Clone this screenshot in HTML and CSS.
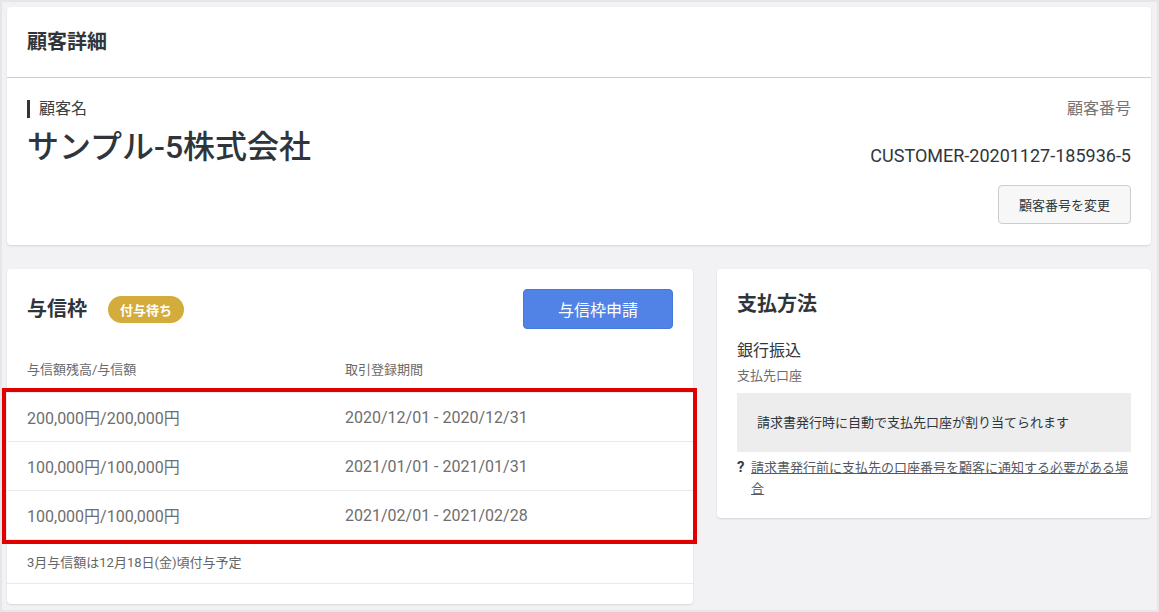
FILE: index.html
```html
<!DOCTYPE html>
<html lang="ja">
<head>
<meta charset="utf-8">
<title>顧客詳細</title>
<link rel="stylesheet" href="styles.css">
</head>
<body>
<div class="frame">
  <section class="card customer">
    <header class="card-header">
      <h1 class="card-title">顧客詳細</h1>
    </header>
    <div class="customer-body">
      <div class="customer-name-block">
        <div class="field-label">顧客名</div>
        <div class="customer-name">サンプル-5株式会社</div>
      </div>
      <div class="customer-number-block">
        <div class="number-label">顧客番号</div>
        <div class="number-value">CUSTOMER-20201127-185936-5</div>
        <button class="btn btn-default" type="button">顧客番号を変更</button>
      </div>
    </div>
  </section>

  <div class="columns">
    <section class="card credit">
      <div class="credit-head">
        <div class="credit-title-wrap">
          <h2 class="card-title">与信枠</h2>
          <span class="badge">付与待ち</span>
        </div>
        <button class="btn btn-primary" type="button">与信枠申請</button>
      </div>
      <div class="credit-table">
        <div class="row row-head">
          <div class="cell">与信額残高/与信額</div>
          <div class="cell">取引登録期間</div>
        </div>
        <div class="rows">
          <div class="row row-data">
            <div class="cell">200,000円/200,000円</div>
            <div class="cell">2020/12/01 - 2020/12/31</div>
          </div>
          <div class="row row-data">
            <div class="cell">100,000円/100,000円</div>
            <div class="cell">2021/01/01 - 2021/01/31</div>
          </div>
          <div class="row row-data">
            <div class="cell">100,000円/100,000円</div>
            <div class="cell">2021/02/01 - 2021/02/28</div>
          </div>
          <div class="highlight"></div>
        </div>
        <div class="row row-note">
          <div class="cell">3月与信額は12月18日(金)頃付与予定</div>
        </div>
      </div>
    </section>

    <section class="card payment">
      <h2 class="card-title">支払方法</h2>
      <div class="pay-method">銀行振込</div>
      <div class="pay-sub">支払先口座</div>
      <div class="pay-box">請求書発行時に自動で支払先口座が割り当てられます</div>
      <div class="help">
        <span class="help-mark">?</span>
        <a class="help-link" href="#">請求書発行前に支払先の口座番号を顧客に通知する必要がある場合</a>
      </div>
    </section>
  </div>
</div>
</body>
</html>
```

FILE: styles.css
```css
* { box-sizing: border-box; }

html, body {
  margin: 0;
  padding: 0;
}

body {
  font-family: Roboto, "Noto Sans CJK JP", sans-serif;
  color: #30363b;
  background: #f2f2f4;
}

.frame {
  width: 1159px;
  height: 612px;
  border: 2px solid #e6e6e8;
  background: #f2f2f4;
  padding: 5px 6px 5px 5px;
  overflow: hidden;
}

.card {
  background: #fff;
  border-radius: 4px;
  box-shadow: 0 1px 2px rgba(0, 0, 0, 0.12);
}

.card-title {
  margin: 0;
  font-size: 20px;
  font-weight: 700;
  line-height: 30px;
  color: #2f353a;
}

/* customer card */
.card-header {
  height: 71px;
  padding: 0 20px;
  display: flex;
  align-items: center;
  border-bottom: 1px solid #cfcfd1;
}

.customer-body {
  display: flex;
  justify-content: space-between;
  padding: 20px 20px 21px;
}

.field-label {
  display: flex;
  align-items: center;
  font-size: 16px;
  line-height: 22px;
  color: #3a3f44;
}

.field-label::before {
  content: "";
  width: 3px;
  height: 18px;
  background: #2f353a;
  margin-right: 9px;
}

.customer-name {
  margin-top: 7px;
  font-size: 32px;
  line-height: 40px;
  font-weight: 500;
  color: #2f353a;
}

.customer-number-block {
  display: flex;
  flex-direction: column;
  align-items: flex-end;
}

.number-label {
  font-size: 16px;
  line-height: 22px;
  color: #757575;
}

.number-value {
  margin-top: 23px;
  font-size: 18px;
  line-height: 26px;
  color: #30363b;
}

.btn {
  font-family: inherit;
  cursor: pointer;
  border-radius: 4px;
}

.btn-default {
  margin-top: 16px;
  height: 39px;
  width: 133px;
  font-size: 13px;
  color: #30363b;
  background: #f7f7f7;
  border: 1px solid #cdcdcd;
}

/* columns */
.columns {
  display: grid;
  grid-template-columns: 686px 434px;
  gap: 24px;
  margin-top: 24px;
  align-items: start;
}

/* credit card */
.credit {
  padding: 20px 0 20px;
}

.credit-head {
  display: flex;
  justify-content: space-between;
  align-items: center;
  padding: 0 20px;
  height: 40px;
}

.credit-title-wrap {
  display: flex;
  align-items: center;
}

.badge {
  margin-left: 21px;
  height: 27px;
  padding: 0 12px;
  border-radius: 14px;
  background: #d3ac3b;
  color: #fff;
  font-size: 13px;
  font-weight: 700;
  display: inline-flex;
  align-items: center;
}

.btn-primary {
  width: 150px;
  height: 40px;
  font-size: 16px;
  color: #fff;
  background: #5183e7;
  border: 1px solid #4677dc;
}

.credit-table {
  margin-top: 20px;
}

.row {
  display: grid;
  grid-template-columns: 318px 1fr;
  padding: 0 20px;
  align-items: center;
  border-bottom: 1px solid #e9e9eb;
}

.row-head {
  height: 44px;
  padding-bottom: 4px;
  font-size: 13px;
  color: #6b6b6b;
}

.rows {
  position: relative;
}

.row-data {
  height: 49px;
  font-size: 16px;
  color: #6e6e6e;
}

.highlight {
  position: absolute;
  top: -5px;
  bottom: -4px;
  left: -5px;
  right: -4px;
  border: 4px solid #e00000;
  pointer-events: none;
}

.row-note {
  height: 44px;
  font-size: 13px;
  color: #666;
}

/* payment card */
.payment {
  padding: 20px 20px 19px;
}

.pay-method {
  margin-top: 20px;
  font-size: 16px;
  line-height: 24px;
  color: #30363b;
}

.pay-sub {
  margin-top: 3px;
  font-size: 13px;
  line-height: 20px;
  color: #6e6e6e;
}

.pay-box {
  margin-top: 7px;
  background: #ededed;
  padding: 20px 20px 19px;
  font-size: 13px;
  line-height: 20px;
  color: #30363b;
}

.help {
  margin-top: 5px;
  display: flex;
  font-size: 13px;
  line-height: 21px;
}

.help-mark {
  font-size: 15px;
  font-weight: 700;
  color: #3a3f44;
  width: 14px;
  flex: none;
}

.help-link {
  color: #555a5f;
  text-decoration: underline;
}
```
